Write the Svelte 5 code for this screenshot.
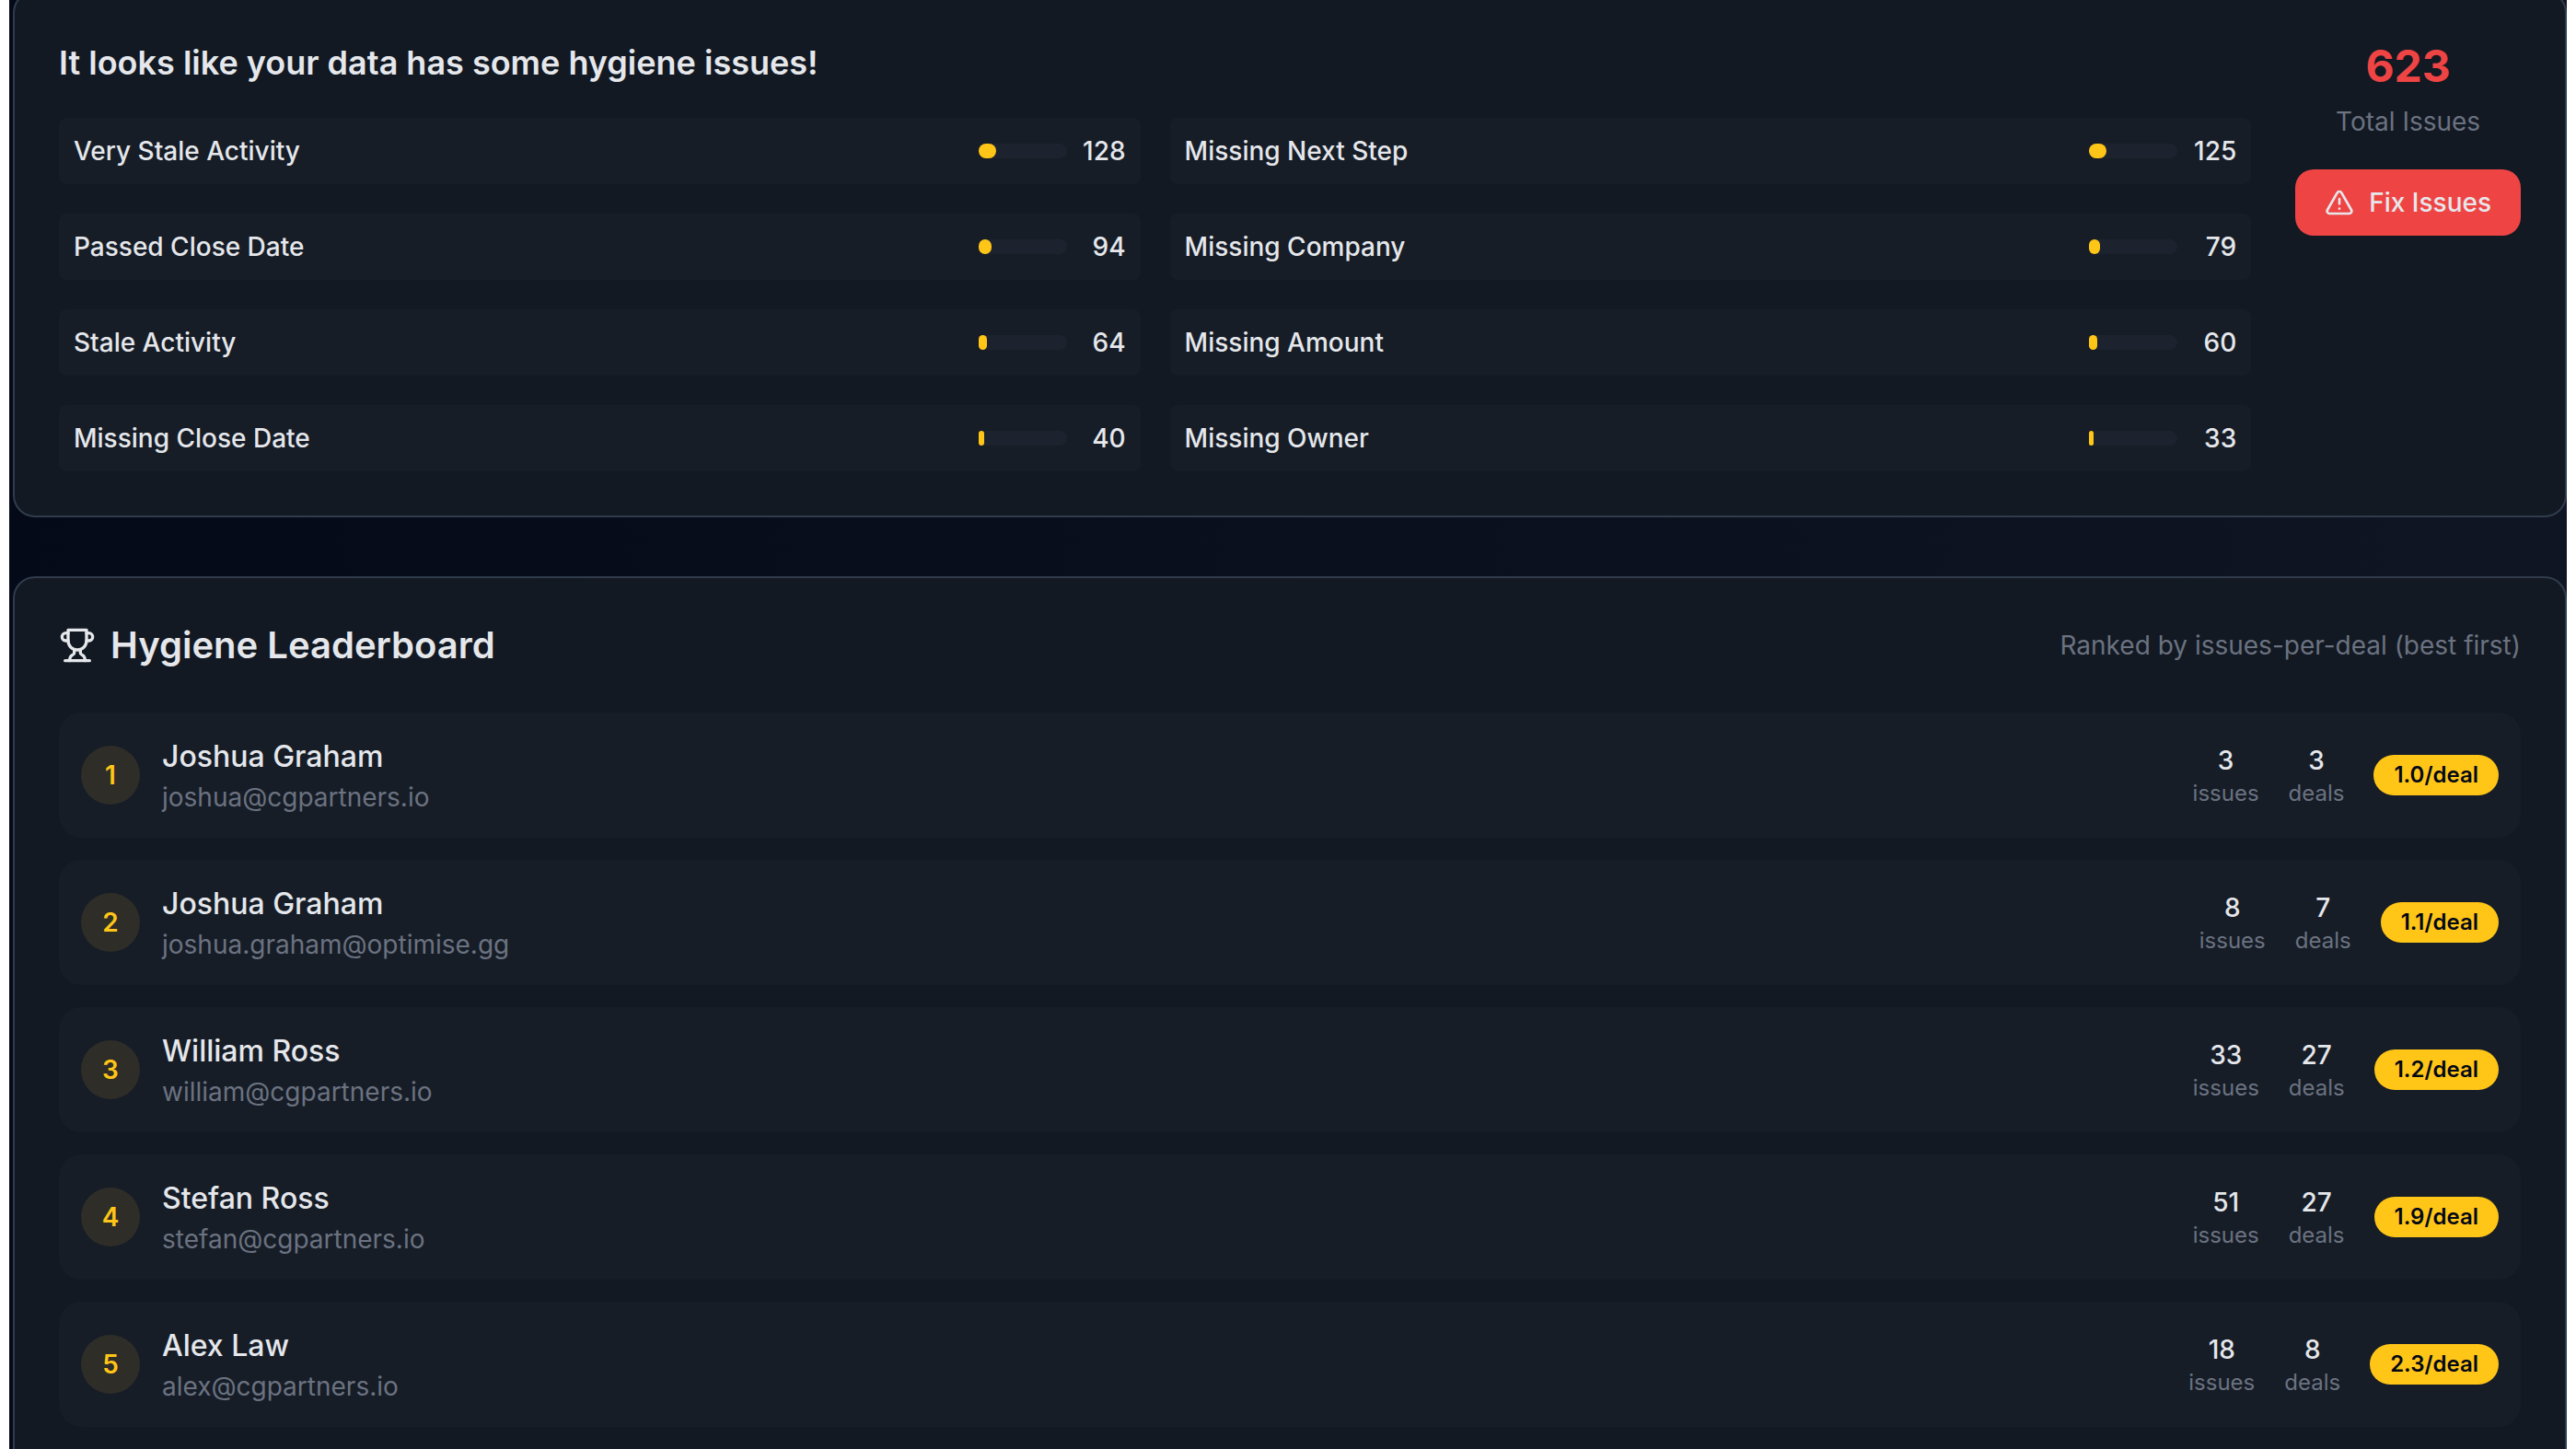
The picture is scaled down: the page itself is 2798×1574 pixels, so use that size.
<script>
  const total = 623;
  const issues = [
    { label: 'Very Stale Activity', count: 128 },
    { label: 'Missing Next Step', count: 125 },
    { label: 'Passed Close Date', count: 94 },
    { label: 'Missing Company', count: 79 },
    { label: 'Stale Activity', count: 64 },
    { label: 'Missing Amount', count: 60 },
    { label: 'Missing Close Date', count: 40 },
    { label: 'Missing Owner', count: 33 },
  ];
  const people = [
    { name: 'Joshua Graham', email: 'joshua@cgpartners.io', issues: 3, deals: 3, rate: '1.0' },
    { name: 'Joshua Graham', email: 'joshua.graham@optimise.gg', issues: 8, deals: 7, rate: '1.1' },
    { name: 'William Ross', email: 'william@cgpartners.io', issues: 33, deals: 27, rate: '1.2' },
    { name: 'Stefan Ross', email: 'stefan@cgpartners.io', issues: 51, deals: 27, rate: '1.9' },
    { name: 'Alex Law', email: 'alex@cgpartners.io', issues: 18, deals: 8, rate: '2.3' },
  ];
</script>

<main>
  <section class="card summary">
    <div class="breakdown">
      <h2>It looks like your data has some hygiene issues!</h2>
      <ul class="issues">
        {#each issues as issue}
          <li class="issue">
            <span class="label">{issue.label}</span>
            <span class="track"><span class="fill" style="width: {(issue.count / total) * 100}%"></span></span>
            <span class="count">{issue.count}</span>
          </li>
        {/each}
      </ul>
    </div>
    <div class="total">
      <strong>{total}</strong>
      <p>Total Issues</p>
      <button type="button">
        <svg viewBox="0 0 24 24" aria-hidden="true">
          <path d="m21.73 18-8-14a2 2 0 0 0-3.48 0l-8 14A2 2 0 0 0 4 21h16a2 2 0 0 0 1.73-3" />
          <path d="M12 9v4" />
          <path d="M12 17h.01" />
        </svg>
        Fix Issues
      </button>
    </div>
  </section>

  <section class="card board">
    <header>
      <svg viewBox="0 0 24 24" aria-hidden="true">
        <path d="M6 9H4.500a2.500 2.500 0 0 1 0-5H6" />
        <path d="M18 9h1.500a2.500 2.500 0 0 0 0-5H18" />
        <path d="M4 22h16" />
        <path d="M10 14.660V17c0 .550-.470.980-.970 1.210C7.850 18.750 7 20.240 7 22" />
        <path d="M14 14.660V17c0 .550.470.980.970 1.210C16.150 18.750 17 20.240 17 22" />
        <path d="M18 2H6v7a6 6 0 0 0 12 0V2Z" />
      </svg>
      <h2>Hygiene Leaderboard</h2>
      <p>Ranked by issues-per-deal (best first)</p>
    </header>
    <ol>
      {#each people as person, i}
        <li class="person">
          <span class="rank">{i + 1}</span>
          <div class="who">
            <div class="name">{person.name}</div>
            <div class="email">{person.email}</div>
          </div>
          <div class="stat"><b>{person.issues}</b><span>issues</span></div>
          <div class="stat"><b>{person.deals}</b><span>deals</span></div>
          <span class="badge">{person.rate}/deal</span>
        </li>
      {/each}
    </ol>
  </section>
</main>

<style>
  :global(body) {
    background: #fff;
  }
  main {
    box-sizing: border-box;
    height: 100vh;
    overflow: hidden;
    margin: 0 10px;
    padding-left: 4px;
    display: flex;
    flex-direction: column;
    gap: 64px;
    background: linear-gradient(to right, #040a18, #0f1522);
    color: #e5e7eb;
    font-family: Inter, "Liberation Sans", sans-serif;
    font-size: 28px;
    line-height: 40px;
  }
  h2, p, ul, ol {
    margin: 0;
    padding: 0;
    list-style: none;
  }
  svg {
    flex: none;
    fill: none;
    stroke: currentColor;
    stroke-width: 2;
    stroke-linecap: round;
    stroke-linejoin: round;
  }
  .card {
    flex: none;
    padding: 48px;
    border: 2px solid #303c4c;
    border-radius: 24px;
    background: #121923;
  }
  .summary {
    display: flex;
    align-items: flex-start;
    gap: 48px;
    margin-top: -10px;
  }
  .breakdown {
    flex: 1;
  }
  .breakdown h2 {
    margin-bottom: 32px;
    font-size: 36px;
    font-weight: 600;
    line-height: 56px;
  }
  .issues {
    display: grid;
    grid-template-columns: 1fr 1fr;
    gap: 32px;
  }
  .issue {
    display: flex;
    align-items: center;
    padding: 16px;
    border-radius: 8px;
    background: #161d27;
    font-weight: 500;
  }
  .label {
    flex: 1;
  }
  .track {
    width: 96px;
    height: 16px;
    border-radius: 8px;
    background: #1d232e;
  }
  .fill {
    display: block;
    height: 100%;
    border-radius: 8px;
    background: #ffc517;
  }
  .count {
    width: 64px;
    text-align: right;
  }
  .total {
    display: flex;
    flex-direction: column;
    align-items: center;
    color: #6b7280;
  }
  .total strong {
    margin-bottom: 8px;
    color: #ef4444;
    font-size: 48px;
    font-weight: 700;
    line-height: 64px;
  }
  button {
    display: flex;
    align-items: center;
    gap: 16px;
    margin-top: 32px;
    padding: 16px 32px;
    border: 0;
    border-radius: 20px;
    background: #ef4444;
    color: #e5e7eb;
    font: inherit;
    font-weight: 500;
  }
  button svg {
    width: 32px;
    height: 32px;
  }
  header {
    display: flex;
    align-items: center;
    gap: 16px;
    margin-bottom: 48px;
  }
  header svg {
    width: 40px;
    height: 40px;
  }
  header h2 {
    flex: 1;
    font-size: 40px;
    font-weight: 600;
    line-height: 50px;
  }
  header p {
    color: #6b7280;
  }
  ol {
    display: grid;
    gap: 24px;
  }
  .person {
    display: flex;
    align-items: center;
    gap: 32px;
    padding: 24px;
    border-radius: 24px;
    background: #161d27;
  }
  .rank {
    display: grid;
    place-items: center;
    width: 64px;
    height: 64px;
    margin-right: -8px;
    border-radius: 50%;
    background: #2e2d28;
    color: #ffc517;
    font-weight: 600;
  }
  .who {
    flex: 1;
  }
  .name {
    font-size: 32px;
    font-weight: 500;
    line-height: 48px;
  }
  .email {
    color: #6b7280;
  }
  .stat {
    display: grid;
    justify-items: center;
  }
  .stat b {
    font-weight: 500;
  }
  .stat span {
    color: #6b7280;
    font-size: 24px;
    line-height: 32px;
  }
  .badge {
    padding: 6px 22px;
    border-radius: 22px;
    background: #ffc517;
    color: #030817;
    font-size: 24px;
    font-weight: 600;
    line-height: 32px;
  }
</style>
